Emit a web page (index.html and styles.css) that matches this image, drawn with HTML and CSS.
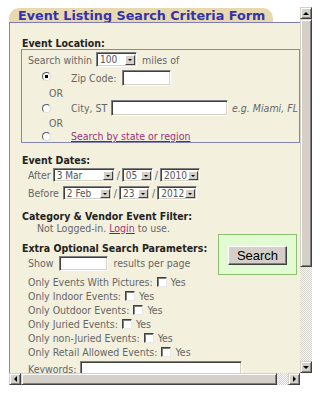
FILE: index.html
```html
<!DOCTYPE html>
<html>
<head>
<meta charset="utf-8">
<link rel="stylesheet" href="styles.css">
</head>
<body>
<div class="frame">
  <div class="view">
    <div class="page">
      <div class="tab">Event Listing Search Criteria Form</div>
      <div class="box">
        <div class="h">Event Location:</div>
        <div class="loc">
          <div class="row within">Search within <span class="sel s100"><span class="sv">100</span><span class="sb"><i class="ad"></i></span></span> miles of</div>
          <div class="row opt o1"><input type="radio" name="loc" class="radio" checked><span class="lbl">Zip Code:</span><input type="text" class="txt zip"></div>
          <div class="or">OR</div>
          <div class="row opt o2"><input type="radio" name="loc" class="radio"><span class="lbl">City, ST</span><input type="text" class="txt city"><em class="eg">e.g. Miami, FL</em></div>
          <div class="or">OR</div>
          <div class="row opt o3"><input type="radio" name="loc" class="radio"><a class="lnk" href="#">Search by state or region</a></div>
        </div>

        <div class="h dates">Event Dates:</div>
        <div class="row date d1">After <span class="sel smon"><span class="sv">3 Mar</span><span class="sb"><i class="ad"></i></span></span><span class="sl">/</span><span class="sel sday"><span class="sv">05</span><span class="sb"><i class="ad"></i></span></span><span class="sl">/</span><span class="sel syr"><span class="sv">2010</span><span class="sb"><i class="ad"></i></span></span></div>
        <div class="row date d2">Before <span class="sel smon2"><span class="sv">2 Feb</span><span class="sb"><i class="ad"></i></span></span><span class="sl">/</span><span class="sel sday"><span class="sv">23</span><span class="sb"><i class="ad"></i></span></span><span class="sl">/</span><span class="sel syr"><span class="sv">2012</span><span class="sb"><i class="ad"></i></span></span></div>

        <div class="h cat">Category &amp; Vendor Event Filter:</div>
        <div class="nl">Not Logged-in. <a class="lnk" href="#">Login</a> to use.</div>

        <div class="extra">
          <div class="xcol">
            <div class="h xh">Extra Optional Search Parameters:</div>
            <div class="row show">Show <input type="text" class="txt num"> results per page</div>
            <div class="row ck">Only Events With Pictures: <input type="checkbox" class="cb"> Yes</div>
            <div class="row ck">Only Indoor Events: <input type="checkbox" class="cb"> Yes</div>
            <div class="row ck">Only Outdoor Events: <input type="checkbox" class="cb"> Yes</div>
            <div class="row ck">Only Juried Events: <input type="checkbox" class="cb"> Yes</div>
            <div class="row ck">Only non-Juried Events: <input type="checkbox" class="cb"> Yes</div>
            <div class="row ck">Only Retail Allowed Events: <input type="checkbox" class="cb"> Yes</div>
            <div class="row kw">Keywords: <input type="text" class="txt kwi"></div>
          </div>
          <div class="go"><button class="btn">Search</button></div>
        </div>
      </div>
    </div>
  </div>
  <div class="vbar">
    <div class="sbtn"><i class="au"></i></div>
    <div class="vthumb"></div>
    <div class="track"></div>
    <div class="sbtn"><i class="ad"></i></div>
  </div>
  <div class="hbar">
    <div class="sbtn"><i class="al"></i></div>
    <div class="hthumb"></div>
    <div class="track"></div>
    <div class="sbtn"><i class="ar"></i></div>
  </div>
  <div class="corner"></div>
</div>
</body>
</html>
```
FILE: styles.css
```css
html, body { margin: 0; padding: 0; background: #fff; }
body { font-family: "DejaVu Sans Condensed", "DejaVu Sans", sans-serif; font-size: 10.5px; color: #666; }

.frame {
  margin: 7px 0 0 9px;
  width: 303px;
  height: 378px;
  display: grid;
  grid-template-columns: 291px 12px;
  grid-template-rows: 366px 12px;
}
.view { overflow: hidden; background: #fff; }
.page { width: 330px; }

.tab {
  margin-top: 1px;
  width: 255px;
  height: 14px;
  padding-left: 9px;
  background: #e8d8b0;
  border-radius: 10px 10px 0 0;
  color: #3333aa;
  font-family: "DejaVu Sans", sans-serif;
  font-weight: bold;
  font-size: 12.75px;
  line-height: 15px;
  white-space: nowrap;
  overflow: hidden;
}
.box {
  border-top: 1px solid #7d7db5;
  border-left: 1px solid #8a8a9a;
  background: #f3f1de;
  padding: 15px 0 40px 12px;
}
.h { color: #222; font-weight: bold; line-height: 11px; height: 11px; white-space: nowrap; }

.row { display: flex; align-items: center; white-space: nowrap; }
.loc {
  margin-left: -1px;
  width: 277px;
  border: 1px solid #8585bb;
}
.within { padding-left: 6px; margin-top: 2px; height: 15px; }
.opt { height: 16px; padding-left: 20px; }
.o1 { margin-top: 3px; }
.o3 { height: 12px; }
.or { height: 14px; line-height: 14px; padding-left: 27px; }

.radio {
  appearance: none;
  -webkit-appearance: none;
  margin: 0;
  width: 9px;
  height: 9px;
  border-radius: 50%;
  border: 1px solid;
  border-color: #555 #ddd #ddd #555;
  background: #fff;
  flex: none;
}
.o1 .radio { margin-top: -3px; }
.radio:checked { background: radial-gradient(circle, #000 0 1.5px, #fff 2px); }
.lbl { margin-left: 20px; }
.o1 .lbl { width: 51px; }
.o2 .lbl { width: 40px; }
.o3 .lnk { margin-left: 20px; }

.txt {
  appearance: none;
  -webkit-appearance: none;
  margin: 0;
  padding: 0;
  height: 16px;
  box-sizing: border-box;
  border: 1px solid;
  border-color: #808080 #fff #fff #808080;
  box-shadow: inset 1px 1px 0 #404040, inset -1px -1px 0 #d4d0c8;
  background: #fff;
  font: inherit;
  flex: none;
}
.zip { width: 49px; }
.city { width: 117px; }
.eg { margin-left: 4px; color: #666; }

.lnk { color: #993377; text-decoration: underline; text-decoration-color: #7a1a6a; }

.sel {
  display: inline-flex;
  box-sizing: border-box;
  height: 15px;
  border: 1px solid;
  border-color: #808080 #fff #fff #808080;
  box-shadow: inset 1px 1px 0 #404040, inset -1px -1px 0 #d4d0c8;
  background: #fff;
  padding: 2px 1px 1px 2px;
  flex: none;
  align-items: stretch;
}
.sv { flex: 1; line-height: 10px; font-size: 10px; color: #555; padding-left: 1px; }
.sb {
  width: 10px;
  box-sizing: border-box;
  background: #d4d0c8;
  border: 1px solid;
  border-color: #fff #404040 #404040 #fff;
  display: flex;
  align-items: center;
  justify-content: center;
}
.s100 { width: 41px; margin: 0 5px 0 4px; }

.dates { margin-top: 11px; line-height: 12px; height: 12px; }
.date { padding-left: 6px; height: 14px; }
.d1 { margin-top: 2px; }
.d2 { margin-top: 4px; }
.date .sel { height: 14px; }
.smon { width: 62px; margin-left: 2px; }
.smon2 { width: 49px; margin-left: 4px; }
.sday { width: 31px; }
.syr { width: 40px; }
.sl { margin: 0 2px; }

.cat { margin-top: 11px; }
.nl { padding-left: 15px; line-height: 11px; height: 11px; margin-top: 1px; white-space: nowrap; }

.extra { display: flex; align-items: flex-start; }
.xcol { width: 196px; }
.xh { margin-top: 8px; line-height: 12px; height: 12px; }
.show { padding-left: 6px; height: 16px; margin-top: 1px; }
.num { width: 49px; height: 15px; margin: 0 6px 0 5px; }
.ck { padding-left: 6px; height: 14px; }
.show + .ck { margin-top: 4px; }
.cb {
  appearance: none;
  -webkit-appearance: none;
  margin: 0 4px 0 4px;
  width: 10px;
  height: 10px;
  box-sizing: border-box;
  border: 1px solid;
  border-color: #404040 #e8e8e8 #e8e8e8 #404040;
  box-shadow: inset 1px 1px 0 #808080;
  background: #fff;
  flex: none;
}
.kw { padding-left: 6px; height: 16px; margin-top: 2px; }
.kwi { width: 162px; margin-left: 4px; }

.go {
  width: 77px;
  height: 39px;
  background: #e2fbd2;
  border: 1px solid #8fbf70;
  display: flex;
  align-items: flex-start;
  justify-content: flex-start;
  flex: none;
}
.btn {
  margin: 11px 0 0 9px;
  width: 59px;
  height: 19px;
  padding: 0;
  background: #d4d0c8;
  border: 1px solid;
  border-color: #fff #404040 #404040 #fff;
  box-shadow: inset -1px -1px 0 #808080;
  font-family: "Liberation Sans", Arial, sans-serif;
  font-size: 13px;
  color: #000;
}

/* scrollbars */
.vbar { display: flex; flex-direction: column; }
.hbar { display: flex; }
.sbtn {
  width: 12px;
  height: 12px;
  box-sizing: border-box;
  background: #d4d0c8;
  border: 1px solid;
  border-color: #d4d0c8 #404040 #404040 #d4d0c8;
  box-shadow: inset 1px 1px 0 #fff, inset -1px -1px 0 #808080;
  display: flex;
  align-items: center;
  justify-content: center;
  flex: none;
}
.vthumb, .hthumb {
  box-sizing: border-box;
  background: #d4d0c8;
  border: 1px solid;
  border-color: #d4d0c8 #404040 #404040 #d4d0c8;
  box-shadow: inset 1px 1px 0 #fff, inset -1px -1px 0 #808080;
  flex: none;
}
.vthumb { height: 248px; }
.hthumb { width: 256px; }
.track {
  flex: 1;
  background: repeating-conic-gradient(#d4d0c8 0 25%, #fff 0 50%) 0 0 / 2px 2px;
}
.corner { background: #fff; }

i { display: block; width: 0; height: 0; border-style: solid; }
.au { border-width: 0 3px 3px 3px; border-color: transparent transparent #000 transparent; }
.ad { border-width: 3px 3px 0 3px; border-color: #000 transparent transparent transparent; }
.al { border-width: 3px 3px 3px 0; border-color: transparent #000 transparent transparent; }
.ar { border-width: 3px 0 3px 3px; border-color: transparent transparent transparent #000; }
.sb .ad { border-width: 2px 2px 0 2px; }
```
